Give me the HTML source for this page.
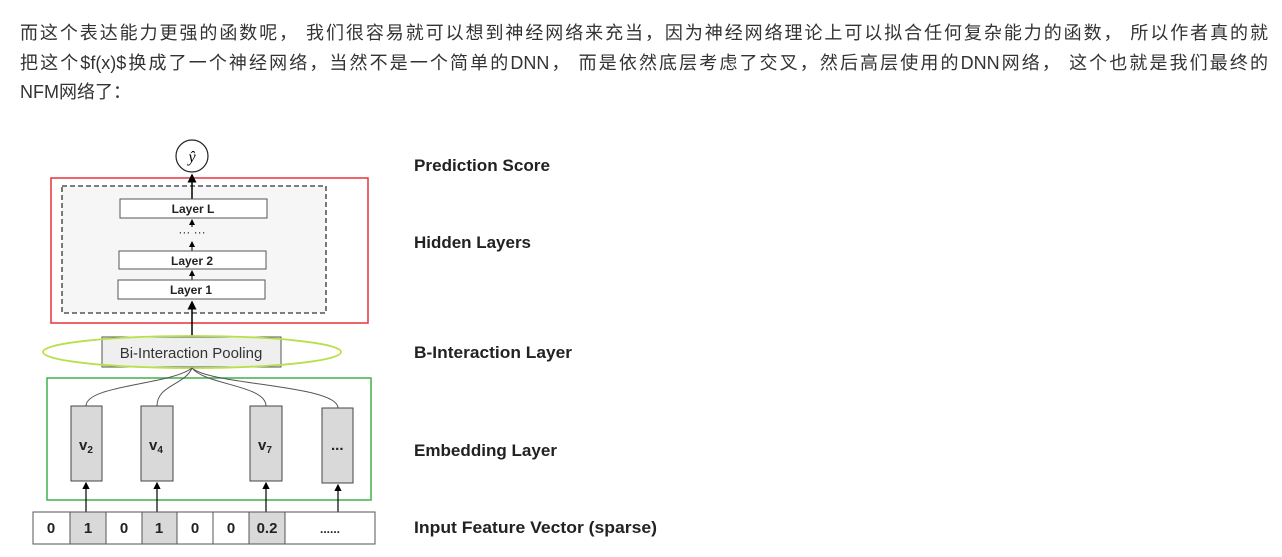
<!DOCTYPE html>
<html><head><meta charset="utf-8"><style>
html,body{margin:0;padding:0;background:#fff;width:1282px;height:557px;overflow:hidden}
.p{position:absolute;left:20px;top:19px;margin:0;width:1248px;font-family:"Liberation Sans","Noto Sans CJK SC",sans-serif;font-size:18px;line-height:29.5px;color:#333;}
.p div{white-space:nowrap;text-align:justify;text-align-last:justify;height:29.5px}
.p div.l{text-align-last:left}
svg{position:absolute;left:0;top:0}
</style></head><body>
<div class="p">
<div>而这个表达能力更强的函数呢， 我们很容易就可以想到神经网络来充当，因为神经网络理论上可以拟合任何复杂能力的函数， 所以作者真的就</div>
<div>把这个$f(x)$换成了一个神经网络，当然不是一个简单的DNN， 而是依然底层考虑了交叉，然后高层使用的DNN网络， 这个也就是我们最终的</div>
<div class="l">NFM网络了：</div>
</div>
<svg width="1282" height="557" font-family="Liberation Sans, sans-serif">
<defs><marker id="a" markerWidth="6" markerHeight="6" refX="5" refY="3" orient="auto"><path d="M0,0L6,3L0,6z" fill="#000"/></marker></defs>
<circle cx="192" cy="156" r="16" fill="#fff" stroke="#222" stroke-width="1.2"/>
<text x="192" y="162" font-size="16" font-style="italic" text-anchor="middle" font-family="Liberation Serif,serif">ŷ</text>
<rect x="51" y="178" width="317" height="145" fill="none" stroke="#e8333a" stroke-width="1.5"/>
<rect x="62" y="186" width="264" height="127" fill="#f6f6f6" stroke="#333" stroke-width="1.3" stroke-dasharray="5,3"/>
<line x1="192" y1="337" x2="192" y2="302" stroke="#000" stroke-width="1.5" marker-end="url(#a)"/>
<line x1="192" y1="199" x2="192" y2="175" stroke="#000" stroke-width="1.5" marker-end="url(#a)"/>
<line x1="192" y1="280" x2="192" y2="271" stroke="#000" stroke-width="1" marker-end="url(#a)"/>
<line x1="192" y1="251" x2="192" y2="242" stroke="#000" stroke-width="1" marker-end="url(#a)"/>
<line x1="192" y1="227" x2="192" y2="220" stroke="#000" stroke-width="1" marker-end="url(#a)"/>
<g font-weight="bold" font-size="12" text-anchor="middle" fill="#222">
<rect x="120" y="199" width="147" height="19" fill="#fff" stroke="#555"/><text x="193" y="213">Layer L</text>
<text x="192" y="236" font-weight="normal">··· ···</text>
<rect x="119" y="251" width="147" height="18" fill="#fff" stroke="#555"/><text x="192" y="265">Layer 2</text>
<rect x="118" y="280" width="147" height="19" fill="#fff" stroke="#555"/><text x="191" y="294">Layer 1</text>
</g>
<rect x="102" y="337" width="179" height="30" fill="#efefef" stroke="#555"/>
<ellipse cx="192" cy="352" rx="149" ry="16" fill="none" stroke="#b8e04a" stroke-width="1.8"/>
<text x="191" y="358" font-size="15" text-anchor="middle" fill="#333">Bi-Interaction Pooling</text>
<rect x="47" y="378" width="324" height="122" fill="none" stroke="#3fb24a" stroke-width="1.5"/>
<g fill="none" stroke="#555" stroke-width="1">
<path d="M86,406C86,385 170,385 192,368"/>
<path d="M157,406C157,385 185,385 192,368"/>
<path d="M266,406C266,385 205,385 192,368"/>
<path d="M338,408C338,385 210,385 192,368"/>
</g>
<g fill="#d9d9d9" stroke="#444">
<rect x="71" y="406" width="31" height="75"/><rect x="141" y="406" width="32" height="75"/>
<rect x="250" y="406" width="32" height="75"/><rect x="322" y="408" width="31" height="75"/>
</g>
<g font-weight="bold" font-size="15" fill="#222">
<text x="79" y="450">v<tspan font-size="10" dy="3">2</tspan></text>
<text x="149" y="450">v<tspan font-size="10" dy="3">4</tspan></text>
<text x="258" y="450">v<tspan font-size="10" dy="3">7</tspan></text>
<text x="331" y="450">...</text>
</g>
<g stroke="#000" stroke-width="1.2">
<line x1="86" y1="512" x2="86" y2="483" marker-end="url(#a)"/><line x1="157" y1="512" x2="157" y2="483" marker-end="url(#a)"/>
<line x1="266" y1="512" x2="266" y2="483" marker-end="url(#a)"/><line x1="338" y1="512" x2="338" y2="485" marker-end="url(#a)"/>
</g>
<g stroke="#555" stroke-width="1">
<rect x="33" y="512" width="37" height="32" fill="#fff"/><rect x="70" y="512" width="36" height="32" fill="#d9d9d9"/>
<rect x="106" y="512" width="36" height="32" fill="#fff"/><rect x="142" y="512" width="35" height="32" fill="#d9d9d9"/>
<rect x="177" y="512" width="36" height="32" fill="#fff"/><rect x="213" y="512" width="36" height="32" fill="#fff"/>
<rect x="249" y="512" width="36" height="32" fill="#d9d9d9"/><rect x="285" y="512" width="90" height="32" fill="#fff"/>
</g>
<g font-weight="bold" font-size="15" text-anchor="middle" fill="#222">
<text x="51" y="533">0</text><text x="88" y="533">1</text><text x="124" y="533">0</text><text x="159" y="533">1</text>
<text x="195" y="533">0</text><text x="231" y="533">0</text><text x="267" y="533">0.2</text><text x="330" y="533" font-size="12">......</text>
</g>
<g font-weight="bold" font-size="17" fill="#222">
<text x="414" y="171" textLength="136" lengthAdjust="spacingAndGlyphs">Prediction Score</text>
<text x="414" y="248" textLength="117" lengthAdjust="spacingAndGlyphs">Hidden Layers</text>
<text x="414" y="358" textLength="158" lengthAdjust="spacingAndGlyphs">B-Interaction Layer</text>
<text x="414" y="456" textLength="143" lengthAdjust="spacingAndGlyphs">Embedding Layer</text>
<text x="414" y="533" textLength="243" lengthAdjust="spacingAndGlyphs">Input Feature Vector (sparse)</text>
</g>
</svg>
</body></html>
